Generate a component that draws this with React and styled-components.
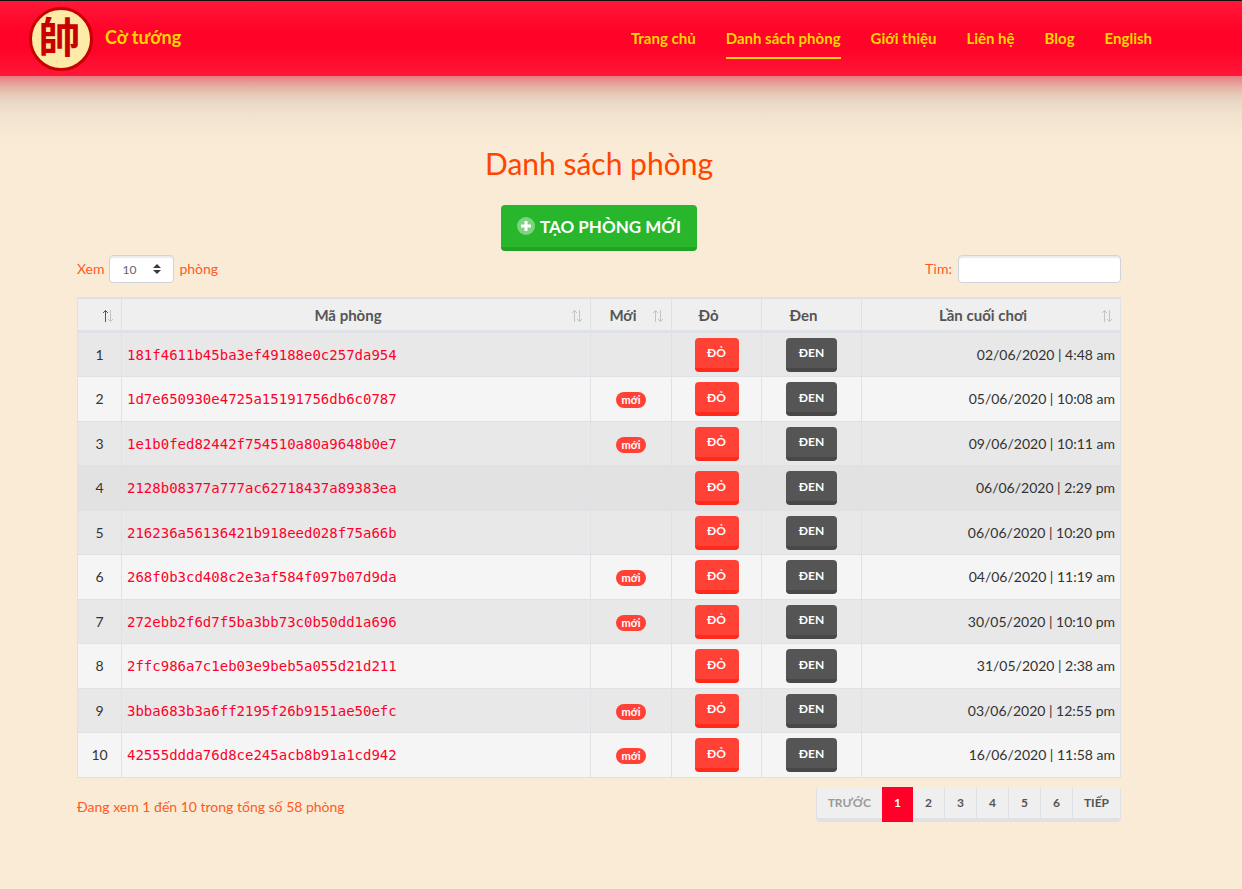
import React from 'react'
import styled, { createGlobalStyle } from 'styled-components'

const links = ['Trang chủ', 'Danh sách phòng', 'Giới thiệu', 'Liên hệ', 'Blog', 'English']

const rooms = [
    { id: 1, code: '181f4611b45ba3ef49188e0c257da954', fresh: false, last: '02/06/2020 | 4:48 am' },
    { id: 2, code: '1d7e650930e4725a15191756db6c0787', fresh: true, last: '05/06/2020 | 10:08 am' },
    { id: 3, code: '1e1b0fed82442f754510a80a9648b0e7', fresh: true, last: '09/06/2020 | 10:11 am' },
    { id: 4, code: '2128b08377a777ac62718437a89383ea', fresh: false, last: '06/06/2020 | 2:29 pm', active: true },
    { id: 5, code: '216236a56136421b918eed028f75a66b', fresh: false, last: '06/06/2020 | 10:20 pm' },
    { id: 6, code: '268f0b3cd408c2e3af584f097b07d9da', fresh: true, last: '04/06/2020 | 11:19 am' },
    { id: 7, code: '272ebb2f6d7f5ba3bb73c0b50dd1a696', fresh: true, last: '30/05/2020 | 10:10 pm' },
    { id: 8, code: '2ffc986a7c1eb03e9beb5a055d21d211', fresh: false, last: '31/05/2020 | 2:38 am' },
    { id: 9, code: '3bba683b3a6ff2195f26b9151ae50efc', fresh: true, last: '03/06/2020 | 12:55 pm' },
    { id: 10, code: '42555ddda76d8ce245acb8b91a1cd942', fresh: true, last: '16/06/2020 | 11:58 am' },
]

const columns = [
    { key: 'id', title: '', width: '44px', sort: 'asc' },
    { key: 'code', title: 'Mã phòng', sort: 'none' },
    { key: 'fresh', title: 'Mới', width: '81px', sort: 'none' },
    { key: 'red', title: 'Đỏ', width: '90px' },
    { key: 'black', title: 'Đen', width: '100px' },
    { key: 'last', title: 'Lần cuối chơi', width: '259px', sort: 'none' },
]

const SortIcon = ({ dir }) => (
    <svg width="12" height="14" viewBox="0 0 12 14" fill="none" aria-hidden="true">
        <path d="M3.5 13V1.5M1 4l2.5-2.5L6 4" stroke={dir === 'asc' ? '#555' : '#c4c4c4'} />
        <path d="M8.5 1v11.5M6 10l2.5 2.5L11 10" stroke="#c4c4c4" />
    </svg>
)

const PlusIcon = () => (
    <svg width="18" height="18" viewBox="0 0 18 18" aria-hidden="true">
        <circle cx="9" cy="9" r="9" fill="#fff" fillOpacity=".4" />
        <path d="M9 4v10M4 9h10" stroke="#fff" strokeWidth="3" />
    </svg>
)

const App = () => {
    return (
        <>
            <GlobalStyle />
            <Header>
                <Brand href="#">
                    <Piece>帥</Piece>
                    <BrandName>Cờ tướng</BrandName>
                </Brand>
                <Nav>
                    {links.map((link) => (
                        <NavLink key={link} href="#" $active={link === 'Danh sách phòng'}>{link}</NavLink>
                    ))}
                </Nav>
            </Header>
            <Main>
                <Title>Danh sách phòng</Title>
                <CreateButton type="button">
                    <PlusIcon />
                    TẠO PHÒNG MỚI
                </CreateButton>
                <Toolbar>
                    <Label $gap="5px">
                        Xem
                        <Select defaultValue="10">
                            <option>10</option>
                            <option>25</option>
                            <option>50</option>
                        </Select>
                        phòng
                    </Label>
                    <Label $gap="6px">
                        Tìm:
                        <Search type="search" />
                    </Label>
                </Toolbar>
                <Table>
                    <colgroup>
                        {columns.map((col) => <Col key={col.key} $width={col.width} />)}
                    </colgroup>
                    <thead>
                        <tr>
                            {columns.map((col) => (
                                <Th key={col.key} scope="col">
                                    <ThInner>
                                        <ThTitle>{col.title}</ThTitle>
                                        <SortSlot>{col.sort && <SortIcon dir={col.sort} />}</SortSlot>
                                    </ThInner>
                                </Th>
                            ))}
                        </tr>
                    </thead>
                    <tbody>
                        {rooms.map((room) => (
                            <Row key={room.id} $active={room.active}>
                                <Td>{room.id}</Td>
                                <Td $align="left"><Code href="#">{room.code}</Code></Td>
                                <Td>{room.fresh && <Badge>mới</Badge>}</Td>
                                <Td><SideButton type="button" $side="red">ĐỎ</SideButton></Td>
                                <Td><SideButton type="button" $side="black">ĐEN</SideButton></Td>
                                <Td $align="right">{room.last}</Td>
                            </Row>
                        ))}
                    </tbody>
                </Table>
                <Footer>
                    <Info>Đang xem 1 đến 10 trong tổng số 58 phòng</Info>
                    <Pages>
                        <PageButton type="button" $wide disabled>TRƯỚC</PageButton>
                        {[1, 2, 3, 4, 5, 6].map((n) => (
                            <PageButton key={n} type="button" $current={n === 1}>{n}</PageButton>
                        ))}
                        <PageButton type="button" $wide>TIẾP</PageButton>
                    </Pages>
                </Footer>
            </Main>
        </>
    )
}

export default App

const GlobalStyle = createGlobalStyle`
*{
    box-sizing: border-box;
}
body{
    margin: 0;
    background: #faebd7;
    color: #333;
    font-family: Lato, "Noto Sans CJK TC", sans-serif;
    font-size: 14px;
    line-height: 20px;
}
button,input,select{
    font-family: inherit;
}
`;

const Header = styled.header`
display: flex;
justify-content: space-between;
align-items: center;
height: 76px;
padding: 0 90px 0 29px;
border-top: 1px solid #111;
background: linear-gradient(#ff1838, #ff0329 40%, #ff0329 65%, #ff1838);
`;

const Brand = styled.a`
display: flex;
align-items: center;
gap: 12px;
color: #ffd500;
text-decoration: none;
`;

const BrandName = styled.span`
padding-bottom: 3px;
font-size: 18px;
font-weight: 700;
`;

const Piece = styled.span`
display: flex;
justify-content: center;
align-items: center;
width: 64px;
height: 64px;
padding: 0 3px 8px 0;
border: 3px solid #c80000;
border-radius: 50%;
background: #ffeba8;
color: #c80000;
font-family: "Noto Sans CJK TC", sans-serif;
font-size: 42px;
font-weight: 700;
line-height: 42px;
`;

const Nav = styled.nav`
display: flex;
gap: 30px;
`;

const NavLink = styled.a`
padding: 10px 0 9px;
border-bottom: 2px solid ${({ $active }) => $active ? '#ffd500' : 'transparent'};
color: #ffd500;
font-size: 15px;
font-weight: 700;
text-decoration: none;
`;

const Main = styled.main`
display: flex;
flex-direction: column;
align-items: center;
padding: 67px 121px 40px 77px;
background: linear-gradient(#e97a80, #e6a9a0 9px, #e7c8b8 18px, #ead8c6 26px, #f1e2ce 38px, #f7e8d3 54px, #faebd7 72px);
`;

const Title = styled.h1`
margin: 0 0 22px;
color: #ff4500;
font-size: 30px;
font-weight: 400;
line-height: 40px;
`;

const CreateButton = styled.button`
display: flex;
align-items: center;
gap: 5px;
height: 46px;
padding: 0 16px;
border: 0;
border-bottom: 4px solid #23a127;
border-radius: 4px;
background: #28b62c;
color: #fff;
font-size: 17px;
font-weight: 700;
`;

const Toolbar = styled.div`
display: flex;
justify-content: space-between;
align-self: stretch;
margin: 4px 0 14px;
`;

const Label = styled.label`
display: flex;
align-items: center;
gap: ${({ $gap }) => $gap};
color: #ff5a1f;
`;

const Select = styled.select`
appearance: none;
width: 65px;
height: 28px;
padding: 0 12px;
border: 1px solid #ced4da;
border-radius: 4px;
background: #fff url("data:image/svg+xml,%3Csvg xmlns='http://www.w3.org/2000/svg' viewBox='0 0 4 5'%3E%3Cpath fill='%23343a40' d='M2 0L0 2h4zm0 5L0 3h4z'/%3E%3C/svg%3E") no-repeat right 12px center / 8px 10px;
box-shadow: inset 0 2px 1px rgba(0,0,0,.08);
color: #666;
font-size: 12px;
`;

const Search = styled.input`
appearance: none;
width: 163px;
height: 28px;
border: 1px solid #ced4da;
border-radius: 4px;
background: #fff;
box-shadow: inset 0 2px 1px rgba(0,0,0,.08);
`;

const Table = styled.table`
table-layout: fixed;
width: 100%;
border: 0 solid #dee2e6;
border-width: 2px 0 0 1px;
border-collapse: separate;
border-spacing: 0;
`;

const Col = styled.col`
width: ${({ $width }) => $width || 'auto'};
`;

const Th = styled.th`
height: 34px;
padding: 0;
border: 0 solid #dee2e6;
border-width: 0 1px 3px 0;
background: #efefef;
color: #555;
font-size: 15px;
font-weight: 700;
`;

const ThInner = styled.div`
display: flex;
align-items: center;
padding: 3px 7px 0 3px;
`;

const ThTitle = styled.span`
flex: 1;
padding-bottom: 2px;
`;

const SortSlot = styled.span`
display: flex;
width: 12px;
`;

const Row = styled.tr`
height: 45px;
background: ${({ $active }) => $active ? '#e2e2e2' : '#f5f5f5'};
&:nth-child(odd){
    height: 44px;
    background: #e8e8e8;
}
`;

const Td = styled.td`
padding: 0 5px;
border: 0 solid #dee2e6;
border-width: 0 1px 1px 0;
text-align: ${({ $align }) => $align || 'center'};
`;

const Code = styled.a`
color: #ff0029;
font-family: "DejaVu Sans Mono", monospace;
text-decoration: none;
`;

const Badge = styled.span`
display: inline-block;
height: 16px;
padding: 0 6px;
border-radius: 8px;
background: #ff4136;
color: #fff;
font-size: 11px;
font-weight: 700;
line-height: 16px;
`;

const SideButton = styled.button`
display: block;
width: ${({ $side }) => $side === 'red' ? '44px' : '51px'};
height: 34px;
margin: 0 auto;
padding: 0;
border: 0;
border-bottom: 4px solid ${({ $side }) => $side === 'red' ? '#ff291c' : '#484848'};
border-radius: 4px;
background: ${({ $side }) => $side === 'red' ? '#ff4136' : '#555'};
color: #fff;
font-size: 12px;
font-weight: 700;
`;

const Footer = styled.div`
display: flex;
justify-content: space-between;
align-items: flex-start;
align-self: stretch;
margin-top: 9px;
`;

const Info = styled.p`
margin: 10px 0 0;
color: #ff5a1f;
`;

const Pages = styled.div`
display: flex;
border: 1px solid #dee2e6;
border-width: 0 1px;
border-radius: 4px;
overflow: hidden;
`;

const PageButton = styled.button`
box-sizing: content-box;
width: ${({ $wide }) => $wide ? 'auto' : '31px'};
height: 31px;
padding: ${({ $wide }) => $wide ? '0 11px' : '0'};
border: 0 solid ${({ $current }) => $current ? '#ff0029' : '#dee2e6'};
border-width: 0 0 4px;
background: ${({ $current }) => $current ? '#ff0029' : '#efefef'};
color: ${({ $current }) => $current ? '#fff' : '#555'};
font-size: 12px;
font-weight: 700;
&:nth-child(n+4){
    border-left-width: 1px;
}
&:disabled{
    color: #999;
}
`;
